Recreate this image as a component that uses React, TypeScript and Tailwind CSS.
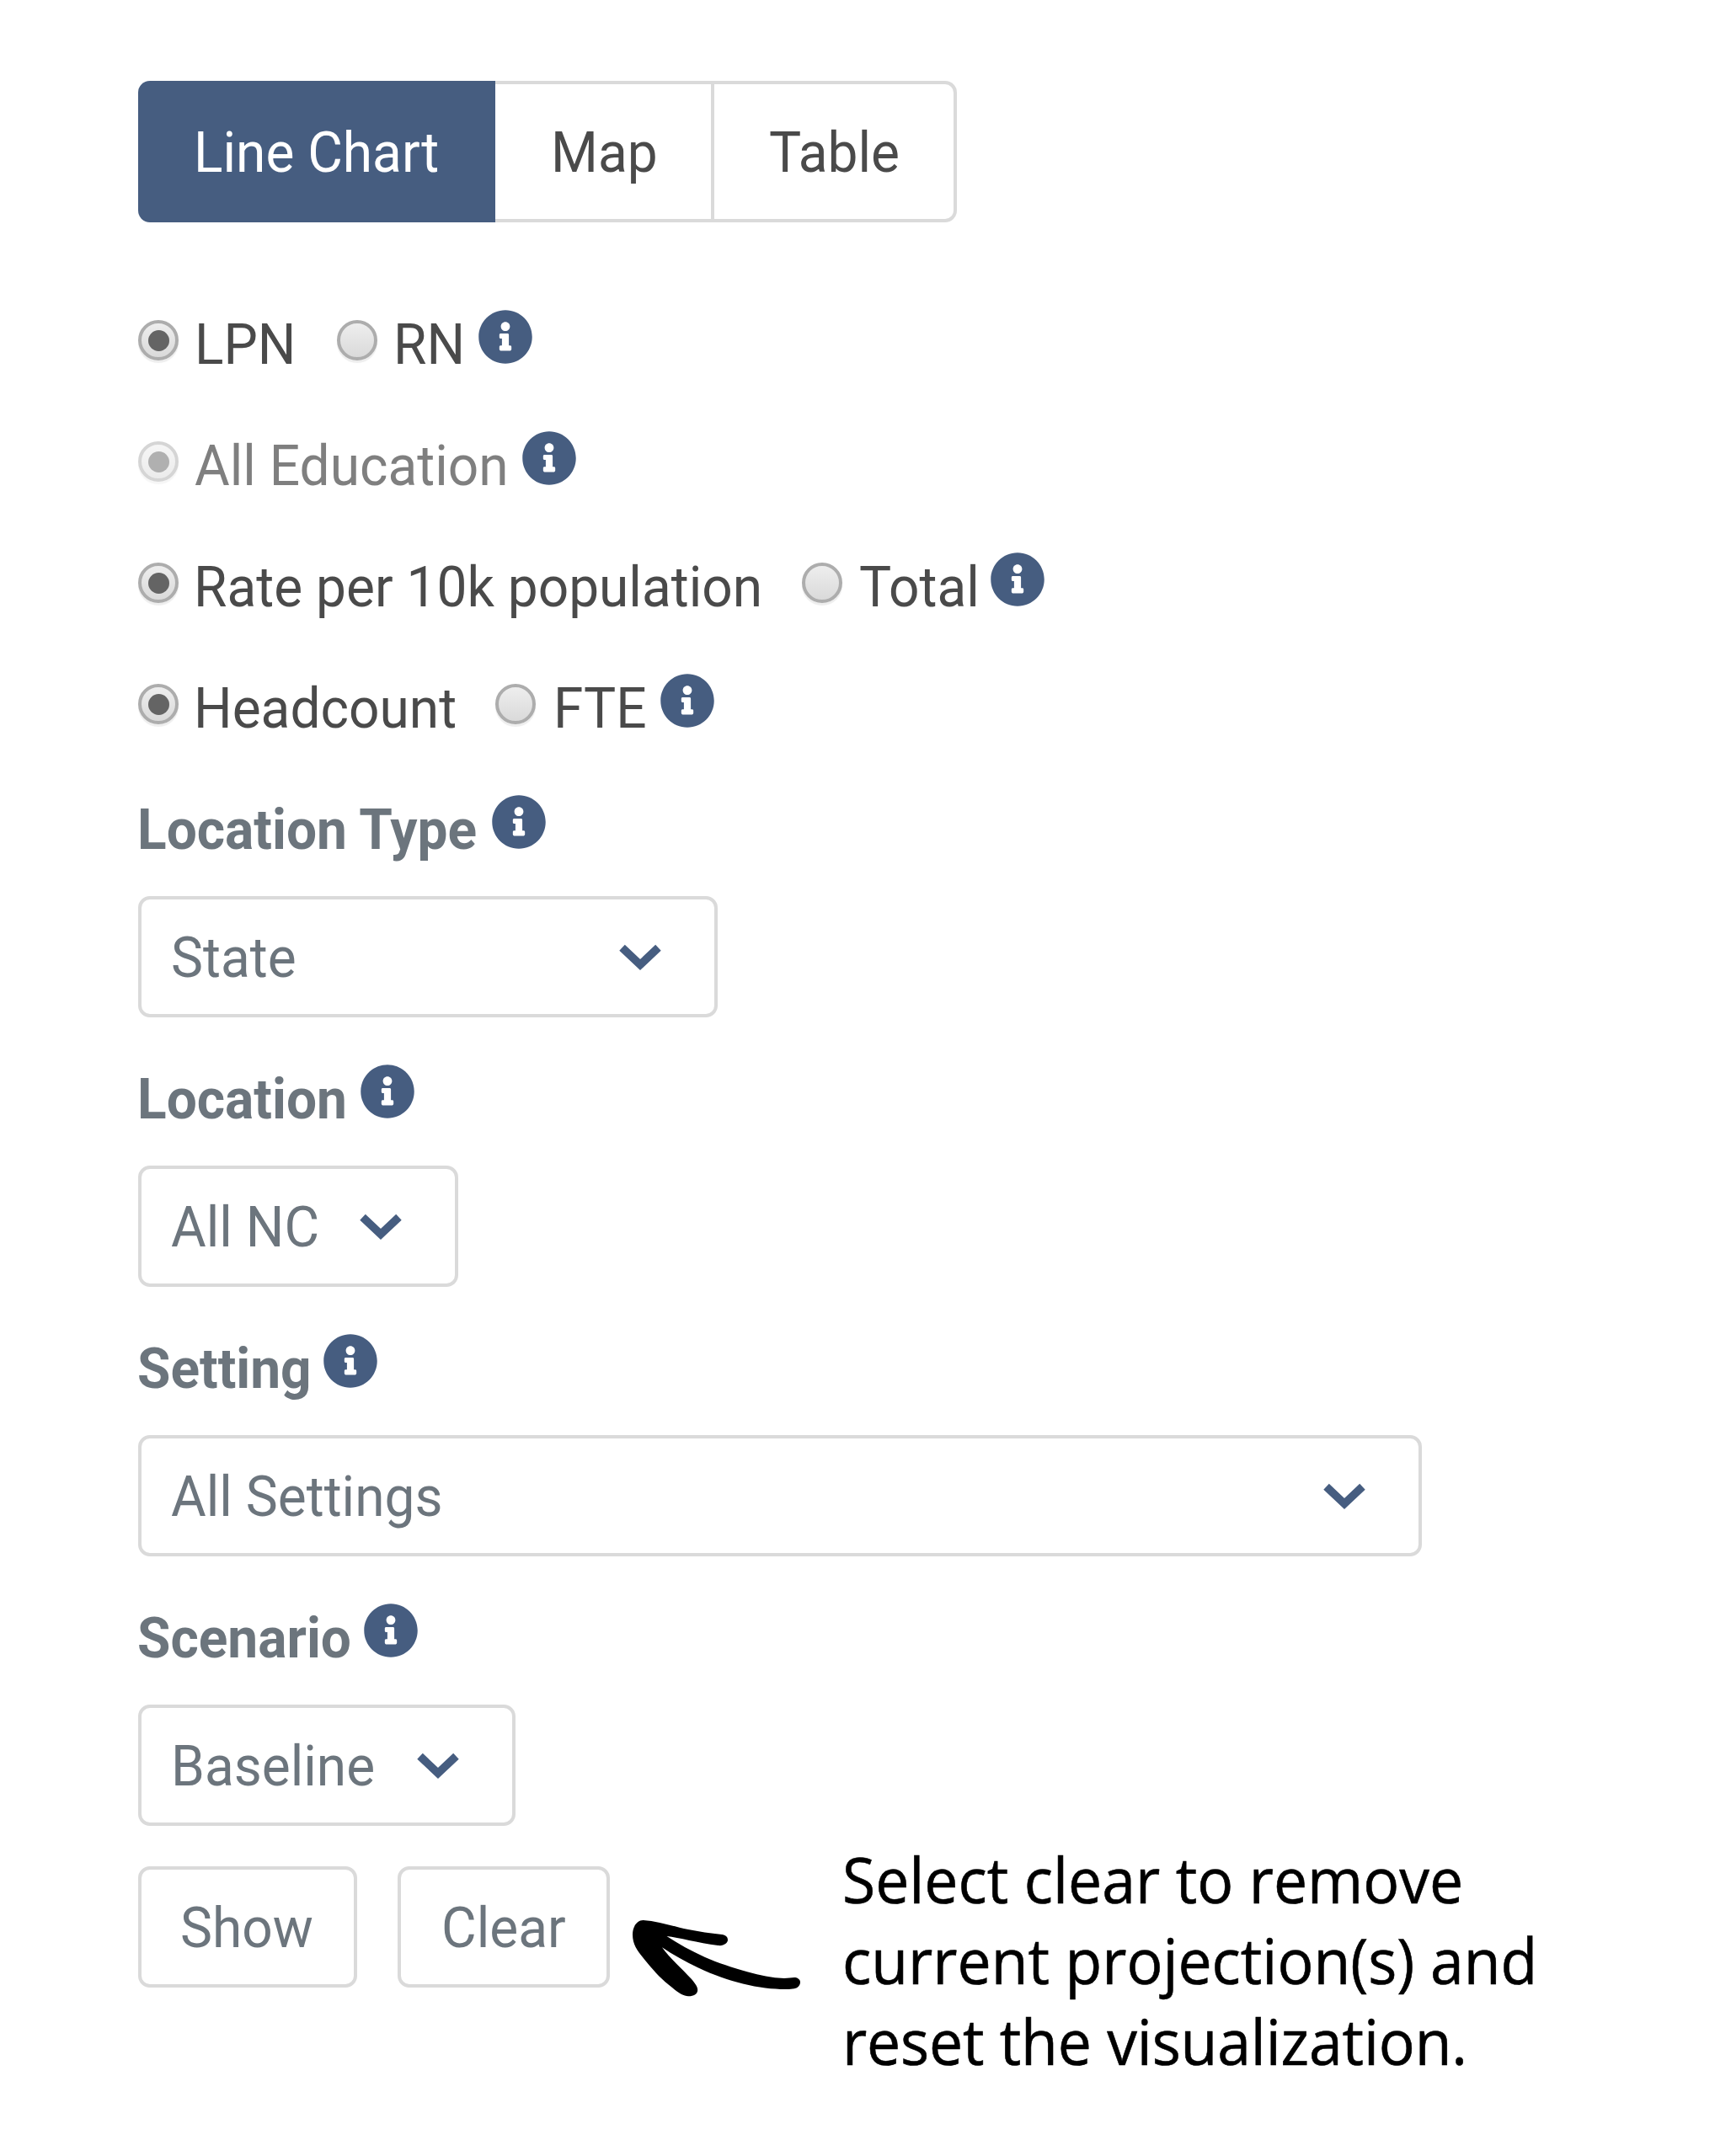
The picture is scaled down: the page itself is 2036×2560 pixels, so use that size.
import type { ReactNode } from "react";

function InfoIcon() {
  return (
    <svg className="mt-[6px] block size-16 shrink-0" viewBox="6 6 500 500" fill="#465d80" aria-hidden="true">
      <path d="M256 8C119.043 8 8 119.083 8 256c0 136.997 111.043 248 248 248s248-111.003 248-248C504 119.083 392.957 8 256 8zm0 110c23.196 0 42 18.804 42 42s-18.804 42-42 42-42-18.804-42-42 18.804-42 42-42zm56 254c0 6.627-5.373 12-12 12h-88c-6.627 0-12-5.373-12-12v-24c0-6.627 5.373-12 12-12h12v-64h-12c-6.627 0-12-5.373-12-12v-24c0-6.627 5.373-12 12-12h64c6.627 0 12 5.373 12 12v100h12c6.627 0 12 5.373 12 12v24z" />
    </svg>
  );
}

function Chevron() {
  return (
    <svg className="mt-[27px] block h-[40px] w-[56px] shrink-0" viewBox="0 0 56 40" fill="none" stroke="#465d80" strokeWidth="9.5" strokeLinecap="square" aria-hidden="true">
      <path d="M10 11.500 28 28.500 46 11.500" />
    </svg>
  );
}

/* Roboto, slightly stretched upwards from its baseline. */
function Txt({ children, className = "" }: { children: ReactNode; className?: string }) {
  return (
    <span className={`mt-px block shrink-0 origin-[0_70px] scale-y-[1.05] whitespace-nowrap text-[64px] leading-[96px] ${className}`}>
      {children}
    </span>
  );
}

function Radio({ checked = false, disabled = false }: { checked?: boolean; disabled?: boolean }) {
  return (
    <span
      className={`mr-4 mt-[18px] flex size-12 shrink-0 items-center justify-center rounded-full border-4 border-[#adadad] bg-linear-to-b from-[#eeeeee] to-[#dadada] shadow-[0_3px_1px_#eeeeee] ${disabled ? "opacity-50" : ""}`}
    >
      {checked && <span className="size-[25px] rounded-full bg-[#646464]" />}
    </span>
  );
}

function Field({ label, labelWidth, boxWidth, value }: { label: string; labelWidth: string; boxWidth: string; value: string }) {
  return (
    <div className="mb-[50px] text-[#6c757d]">
      <div className="-ml-[1px] flex h-24 items-start">
        <Txt className={`font-bold ${labelWidth}`}>{label}</Txt>
        <InfoIcon />
      </div>
      <div className={`mt-[30px] flex h-36 items-start justify-between rounded-[14px] border-4 border-[#dadada] pl-[35px] pr-[60px] pt-[22px] ${boxWidth}`}>
        <Txt>{value}</Txt>
        <Chevron />
      </div>
    </div>
  );
}

function Button({ children, className }: { children: ReactNode; className: string }) {
  return (
    <button className={`flex h-36 shrink-0 items-start rounded-[14px] border-4 border-[#dadada] pt-[22px] text-[#6c757d] ${className}`}>
      <Txt>{children}</Txt>
    </button>
  );
}

export default function App() {
  return (
    <main className="h-[2560px] w-[2036px] overflow-hidden bg-white pl-[164px] pt-24 font-['Roboto',sans-serif] text-[#4a4a4a]">
      <div className="flex h-[168px] w-[972px]">
        <div className="w-[424px] rounded-l-[14px] bg-[#465d80] pl-[66px] pt-[38px] text-white">
          <Txt>Line Chart</Txt>
        </div>
        <div className="w-[260px] border-y-4 border-r-4 border-[#dadada] pl-[66px] pt-[34px]">
          <Txt>Map</Txt>
        </div>
        <div className="w-[288px] rounded-r-[14px] border-y-4 border-r-4 border-[#dadada] pl-[65px] pt-[34px]">
          <Txt>Table</Txt>
        </div>
      </div>

      <div className="mt-[98px] flex flex-col gap-12">
        <div className="flex h-24 items-start">
          <Radio checked />
          <Txt className="w-[172px] pl-[3px]">LPN</Txt>
          <Radio />
          <Txt className="w-[104px] pl-[3px]">RN</Txt>
          <InfoIcon />
        </div>
        <div className="flex h-24 items-start">
          <Radio checked disabled />
          <Txt className="w-[392px] pl-[3px] text-[#7f7f7f]">All Education</Txt>
          <InfoIcon />
        </div>
        <div className="flex h-24 items-start">
          <Radio checked />
          <Txt className="w-[724px] pl-[2px]">Rate per 10k population</Txt>
          <Radio />
          <Txt className="w-[160px] pl-[4px]">Total</Txt>
          <InfoIcon />
        </div>
        <div className="flex h-24 items-start">
          <Radio checked />
          <Txt className="w-[360px] pl-[2px]">Headcount</Txt>
          <Radio />
          <Txt className="w-[132px] pl-[5px]">FTE</Txt>
          <InfoIcon />
        </div>
      </div>

      <div className="mt-12">
        <Field label="Location Type" labelWidth="w-[421px]" boxWidth="w-[688px]" value="State" />
        <Field label="Location" labelWidth="w-[265px]" boxWidth="w-[380px]" value="All NC" />
        <Field label="Setting" labelWidth="w-[221px]" boxWidth="w-[1524px]" value="All Settings" />
        <Field label="Scenario" labelWidth="w-[269px]" boxWidth="w-[448px]" value="Baseline" />
      </div>

      <div className="-mt-[2px] flex items-start">
        <Button className="w-[260px] pl-[46px]">Show</Button>
        <Button className="ml-12 w-[252px] pl-[48px]">Clear</Button>
        <svg className="-mt-9 ml-[6px] block h-[200px] w-[240px] shrink-0" viewBox="0 0 240 200" aria-hidden="true">
          <path d="M33.6 100C26 100 21 108 21 117C21 131 29 139 39.5 152C48 162 56 171 68 180C76 187 82 190 87 190.3C93 190.5 98 188 98.2 183C98.3 179 95 175 91 170C78 156 66 146 56 132.3C69 141 83 149 99 156.5C118 165.5 135 171 152 175.5C170 180 188 182 202 182C208 182 215 181.8 217 179.5C221 176 221 171 217 169C214 167 208 169 201 169C186 168.500 172 165.500 158 161.500C139 156 123 151 107 144C90 136 75 128 61.500 119C76 120.500 98 127 122.500 130C129 131 134 127 134 123.500C134 119.500 131 117.500 127 117C113 115.500 100 113.500 87 111C70 107.500 50 101 33.600 100Z" />
        </svg>
        <p className="-mt-[33px] ml-[30px] origin-top-left scale-x-[0.953] whitespace-nowrap font-['Open_Sans',sans-serif] text-[75px] leading-[96px] text-black [-webkit-text-stroke:0.6px_black]">
          Select clear to remove
          <br />
          current projection(s) and
          <br />
          <span className="tracking-[-0.15px]">reset the visualization.</span>
        </p>
      </div>
    </main>
  );
}
